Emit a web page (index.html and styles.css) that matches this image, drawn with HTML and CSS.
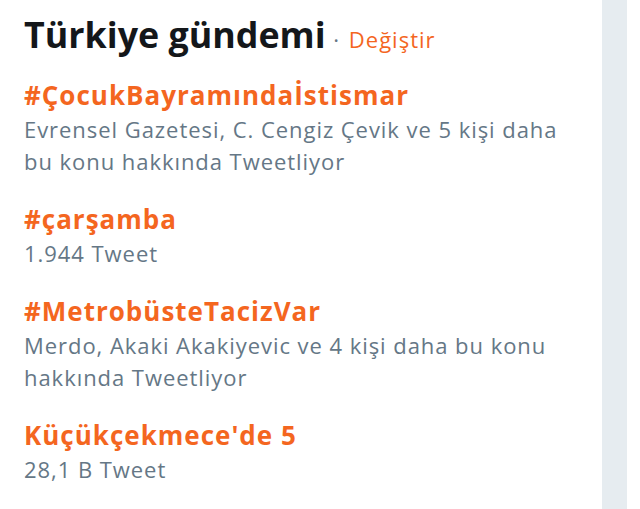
FILE: index.html
```html
<!DOCTYPE html>
<html lang="tr">
<head>
<meta charset="utf-8">
<link rel="stylesheet" href="styles.css">
</head>
<body>
<div class="page">
  <section class="trends">
    <h2 class="title">Türkiye gündemi<span class="sep"> · </span><a class="change">Değiştir</a></h2>
    <ul class="list">
      <li class="trend">
        <a class="name">#ÇocukBayramındaİstismar</a>
        <p class="meta">Evrensel Gazetesi, C. Cengiz Çevik ve 5 kişi daha bu konu hakkında Tweetliyor</p>
      </li>
      <li class="trend">
        <a class="name">#çarşamba</a>
        <p class="meta">1.944 Tweet</p>
      </li>
      <li class="trend">
        <a class="name">#MetrobüsteTacizVar</a>
        <p class="meta">Merdo, Akaki Akakiyevic ve 4 kişi daha bu konu hakkında Tweetliyor</p>
      </li>
      <li class="trend">
        <a class="name">Küçükçekmece'de 5</a>
        <p class="meta">28,1 B Tweet</p>
      </li>
    </ul>
  </section>
  <div class="rail"></div>
  <div class="edge"></div>
</div>
</body>
</html>
```
FILE: styles.css
```css
html, body {
  margin: 0;
  padding: 0;
  background: #fff;
}
.page {
  display: flex;
  height: 509px;
  font-family: "Open Sans", "Noto Sans", sans-serif;
}
.trends {
  width: 578px;
  padding-left: 24px;
  box-sizing: content-box;
}
.rail {
  width: 25px;
  background: #e6ecf0;
}
.edge {
  flex: 1;
  background: #fff;
}
.title {
  margin: 12px 0 0;
  font-size: 35.8px;
  line-height: 44px;
  font-weight: 700;
  color: #14171a;
  white-space: nowrap;
}
.sep {
  font-size: 22px;
  font-weight: 400;
  color: #657786;
  letter-spacing: 2px;
}
.change {
  font-size: 22px;
  font-weight: 400;
  color: #f4661f;
  letter-spacing: 1px;
}
.list {
  list-style: none;
  margin: 18px 0 0;
  padding: 0;
  width: 546px;
}
.trend {
  margin-bottom: 26px;
}
.name {
  display: block;
  font-size: 26px;
  line-height: 32px;
  font-weight: 700;
  letter-spacing: 1px;
  color: #f4661f;
}
.meta {
  margin: 2px 0 0;
  font-size: 22px;
  line-height: 32px;
  letter-spacing: 0.95px;
  color: #657786;
}
```
